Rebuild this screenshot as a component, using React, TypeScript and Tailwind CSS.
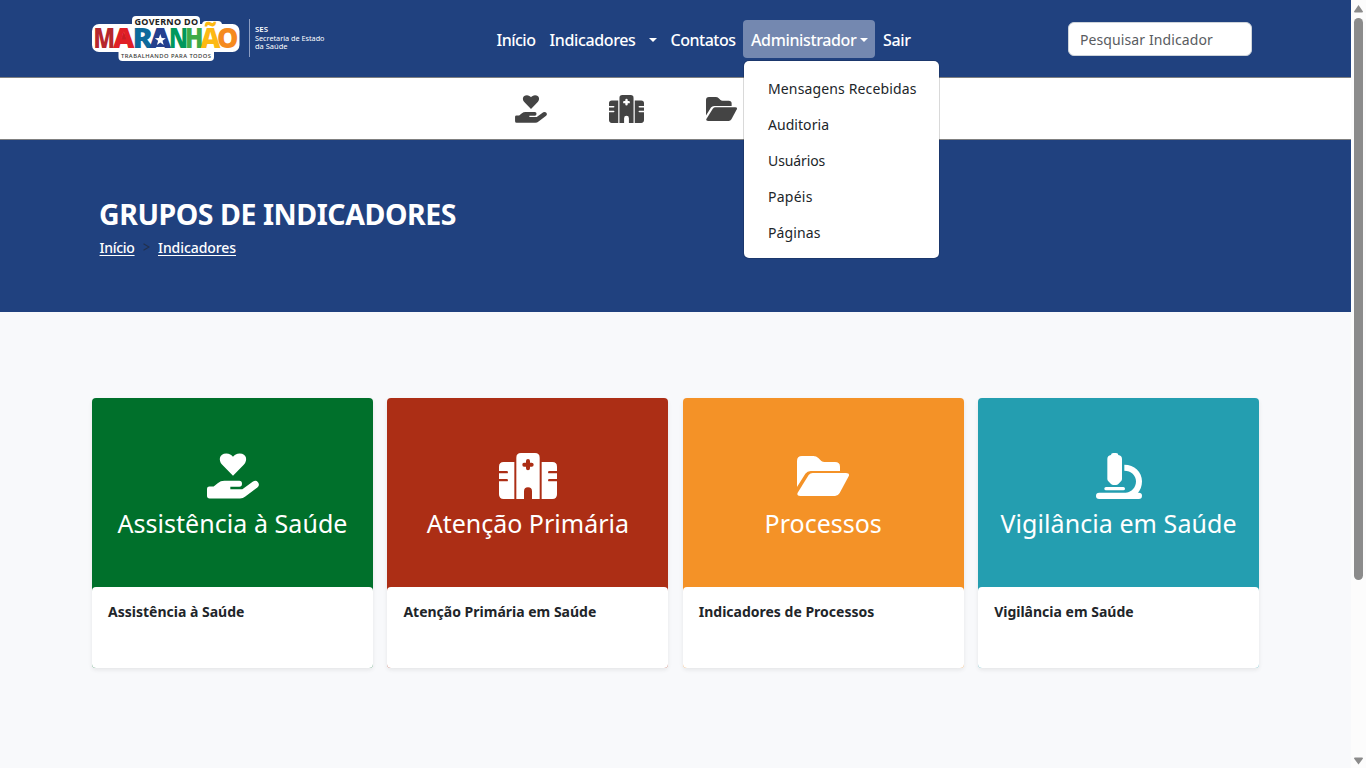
import React from "react";

function HandHeart({ className }: { className: string }) {
  return (
    <svg viewBox="351 191 156 137" className={className} fill="currentColor">
      <path d="M429 259L396 225C385 213 387 192 409 192C418 192 425 197 429 202C433 197 440 192 449 192C471 192 473 213 462 225Z" />
      <path d="M351 298Q351 291 358 291H371L383 281Q392 274 403 274H448Q456 274 456 283Q456 292 448 292H421V299H457L489 276Q498 271 504 278Q510 287 503 293L466 321Q459 327 450 327H359Q351 327 351 319Z" />
    </svg>
  );
}

function Hospital({ className }: { className: string }) {
  return (
    <svg viewBox="357 39 174 138" className={className} fill="currentColor">
      <path d="M403 66H371Q357 66 357 80V93H380Q384 93 384 96.5T380 100H357V117H380Q384 117 384 120.5T380 124H357V163Q357 177 371 177H403Z" />
      <path d="M485 66H517Q531 66 531 80V93H508Q504 93 504 96.5T508 100H531V117H508Q504 117 504 120.5T508 124H531V163Q531 177 517 177H485Z" />
      <path
        fillRule="evenodd"
        d="M423 39H465Q479 39 479 53V177H456V154Q456 142 444 142T432 154V177H409V53Q409 39 423 39ZM438 63V68H432Q427 68 427 74T432 80H438V85Q438 91 444 91T450 85V80H455Q461 80 461 74T455 68H450V63Q450 57 444 57T438 63Z"
      />
    </svg>
  );
}

function FolderOpen({ className }: { className: string }) {
  return (
    <svg viewBox="366 48 156 120" className={className} fill="currentColor">
      <path d="M366 141V63Q366 48 381 48H415Q424 48 430 54L439 63Q443 66 449 66H480Q495 66 495 80V93H407Q397 93 391 101Z" />
      <path d="M401 105Q406 99 413 99H513Q525 99 521 109L494 159Q489 168 480 168H376Q364 167 368 158Z" />
    </svg>
  );
}

function Microscope({ className }: { className: string }) {
  return (
    <svg viewBox="377 39 138 138" className={className} fill="currentColor">
      <path d="M422 45Q422 39 429 39H437Q444 39 444 45Q455 47 455 57V117Q455 121 452 124L444 132Q441 135 437 135H429Q425 135 422 132L414 124Q411 121 411 117V57Q411 47 422 45Z" />
      <rect x="402" y="141" width="62" height="10" rx="5" />
      <rect x="377" y="158" width="138" height="19" rx="9.5" />
      <path d="M462 74C492 74 515 96 515 124C515 139 510 151 502 160L466 159C484 156 497 143 497 124C497 106 482 92 462 92Z" />
    </svg>
  );
}

const logoLetters = [
  { ch: "M", x: 93.5, w: 21.5, fill: "#b5272d" },
  { ch: "A", x: 113, w: 21.5, fill: "#e01f26" },
  { ch: "R", x: 132.5, w: 20.5, fill: "#0c6a9c" },
  { ch: "A", x: 149.5, w: 21.5, fill: "#24408e" },
  { ch: "N", x: 169, w: 19, fill: "#00985c" },
  { ch: "H", x: 185, w: 18.5, fill: "#3faa48" },
  { ch: "Ã", x: 200.5, w: 20, fill: "#fdb913" },
  { ch: "O", x: 217, w: 21.5, fill: "#f58a1f" },
];

function Logo() {
  return (
    <svg viewBox="92 15 240 47" className="h-[47px] w-[240px] shrink-0" fontFamily="Noto Sans, sans-serif">
      <g fill="#fff">
        <rect x="132" y="16" width="68" height="16" rx="4" />
        <rect x="92" y="24" width="147.500" height="28" rx="7" />
        <rect x="202" y="21" width="20" height="10" rx="4" />
        <rect x="118.500" y="46" width="95.500" height="15" rx="4" />
      </g>
      <text x="134.500" y="24.600" fontSize="9" fontWeight="700" fill="#222" textLength="63.500">GOVERNO DO</text>
      <path d="M123.700 31L119 44H128.500Z" fill="#c81d25" />
      <g fontSize="28" fontWeight="900">
        {logoLetters.map((l) => (
          <text key={l.x} x={l.x} y="47.800" fill={l.fill} textLength={l.w} lengthAdjust="spacingAndGlyphs">{l.ch}</text>
        ))}
      </g>
      <path d="M160.300 30L153.500 47H167Z" fill="#24408e" />
      <path d="M160.300 34L161.700 38.100L165.800 38.200L162.500 40.800L163.700 45L160.300 42.500L156.900 45L158.100 40.800L154.800 38.200L158.900 38.100Z" fill="#fff" />
      <text x="121" y="58.400" fontSize="5.800" fontWeight="500" fill="#333" textLength="90">TRABALHANDO PARA TODOS</text>
      <rect x="249" y="19" width="1" height="38" fill="#8b9cc2" />
      <g fill="#fff" fontSize="7.200">
        <text x="255" y="32.400" fontWeight="600" textLength="13" lengthAdjust="spacingAndGlyphs">SES</text>
        <text x="255" y="40.800" textLength="69.500" lengthAdjust="spacingAndGlyphs">Secretaria de Estado</text>
        <text x="255" y="49.300" textLength="32.500" lengthAdjust="spacingAndGlyphs">da Saúde</text>
      </g>
    </svg>
  );
}

function Caret({ className }: { className: string }) {
  return (
    <svg viewBox="0 0 8 4" className={`h-1 w-2 shrink-0 ${className}`} fill="currentColor">
      <path d="M0 0H8L4 4Z" />
    </svg>
  );
}

const menu = [
  { name: "Mensagens Recebidas", track: "tracking-[0.14px]" },
  { name: "Auditoria", track: "tracking-[0.05px]" },
  { name: "Usuários", track: "tracking-[-0.1px]" },
  { name: "Papéis", track: "tracking-[0.25px]" },
  { name: "Páginas", track: "tracking-[0.12px]" },
];

const cards = [
  { title: "Assistência à Saúde", label: "Assistência à Saúde", bg: "bg-[#00702b]", icon: <HandHeart className="ml-[2px] h-[46px] w-[52px]" />, track: "tracking-[0.05px]" },
  { title: "Atenção Primária", label: "Atenção Primária em Saúde", bg: "bg-[#ac2e15]", icon: <Hospital className="h-[46px] w-[58px]" />, track: "" },
  { title: "Processos", label: "Indicadores de Processos", bg: "bg-[#f49227]", icon: <FolderOpen className="h-[40px] w-[52px]" />, track: "" },
  { title: "Vigilância em Saúde", label: "Vigilância em Saúde", bg: "bg-[#249eb0]", icon: <Microscope className="h-[46px] w-[46px]" />, track: "tracking-[0.07px]" },
];

export default function App() {
  return (
    <div className="flex h-[768px] w-[1366px] overflow-hidden bg-[#f8f9fb] font-['Noto_Sans',sans-serif] text-[#212529]">
      <div className="flex min-w-0 flex-1 flex-col">
        <header className="flex h-[78px] shrink-0 items-start border-b border-[#808080] bg-[#20417f] pl-[92px] text-white">
          <div className="mt-[15px] flex">
            <Logo />
          </div>
          <nav className="mt-5 ml-[164.500px] flex h-[38px] items-center text-[16px] font-medium tracking-[-0.37px] whitespace-nowrap">
            <a className="w-[39px] pt-[2px] tracking-[-0.5px]">Início</a>
            <a className="ml-[14px] w-[86px] pt-[2px]">Indicadores</a>
            <Caret className="mt-[2px] ml-[13px]" />
            <a className="ml-[14px] w-[65px] pt-[2px] tracking-[-0.48px]">Contatos</a>
            <div className="relative ml-[7.500px] flex h-[38px] w-[132px] items-center rounded-[4px] bg-[#7488b0] pl-2">
              <a className="w-[105px] pt-[2px]">Administrador</a>
              <Caret className="mt-[2px] ml-[4px]" />
              <ul className="absolute top-[41px] left-[1px] z-10 h-[197px] w-[195px] rounded-[5px] bg-white pt-[9px] text-[14px] font-normal text-[#212529] shadow-[0_0_0_1px_rgba(0,0,0,0.15)]">
                {menu.map((m) => (
                  <li key={m.name} className={`flex h-9 items-center pl-6 ${m.track}`}>{m.name}</li>
                ))}
              </ul>
            </div>
            <a className="ml-2 w-[28px] pt-[2px]">Sair</a>
          </nav>
          <div className="mt-[22px] ml-[157px] flex h-[34px] w-[184px] items-center rounded-[6px] border border-[#ced4da] bg-white pl-[11px] text-[14px] tracking-[0.1px] text-[#595c5f]">
            Pesquisar Indicador
          </div>
        </header>

        <div className="flex h-[62px] shrink-0 items-center border-b border-[#808080] bg-white pl-[515px] text-[#444]">
          <HandHeart className="mt-px h-[28px] w-[32px]" />
          <Hospital className="ml-[62px] h-[28px] w-[35px]" />
          <FolderOpen className="ml-[62px] h-[24px] w-[31px]" />
        </div>

        <section className="flex h-[172px] shrink-0 flex-col bg-[#20417f] pt-[54px] pl-[100px] text-white">
          <h1 className="-ml-px h-10 text-[28.5px] leading-10 font-bold tracking-[-0.45px]">GRUPOS DE INDICADORES</h1>
          <div className="mt-[2px] -ml-[0.500px] flex h-[22px] items-center text-[14px] font-medium">
            <a className="w-[35px] tracking-[-0.28px] underline underline-offset-2">Início</a>
            <svg viewBox="0 0 7 8" className="ml-[8.500px] h-2 w-[7px]" fill="none" stroke="#22304c" strokeWidth="1.200">
              <path d="M0.500 0.700L6 4L0.500 7.300" />
            </svg>
            <a className="ml-[8px] tracking-[-0.07px] underline underline-offset-2">Indicadores</a>
          </div>
        </section>

        <main className="grid grid-cols-4 gap-x-[14.500px] pt-[86px] pr-[92px] pl-[92px]">
          {cards.map((c) => (
            <article key={c.title} className={`h-[270px] rounded-[4px] shadow-[0_2px_4px_rgba(0,0,0,0.08)] ${c.bg}`}>
              <div className="flex h-[189px] flex-col items-center pt-[55px] text-white">
                <div className="flex h-[46px] items-center">{c.icon}</div>
                <h2 className={`mt-[5px] h-[38px] text-[25px] leading-[38px] whitespace-nowrap ${c.track}`}>{c.title}</h2>
              </div>
              <div className="h-[81px] rounded-[4px] bg-white pt-[14px] pl-4 text-[14px] leading-[21px] font-bold">{c.label}</div>
            </article>
          ))}
        </main>
      </div>

      <div className="flex w-[15px] shrink-0 flex-col items-center bg-[#fcfcfc] text-[#8b8b8b]">
        <svg viewBox="0 0 9 8" className="mt-[5px] h-[8px] w-[9px] shrink-0" fill="currentColor">
          <path d="M4.500 0L9 6.500Q9 7.500 8 7.500H1Q0 7.500 0 6.500Z" />
        </svg>
        <div className="mt-[5px] h-[562px] w-[9px] shrink-0 rounded-full bg-[#8b8b8b]" />
        <svg viewBox="0 0 9 8" className="mt-auto mb-[3px] h-[8px] w-[9px] shrink-0" fill="currentColor">
          <path d="M4.500 7.500L9 1.500Q9 0.500 8 0.500H1Q0 0.500 0 1.500Z" />
        </svg>
      </div>
    </div>
  );
}
